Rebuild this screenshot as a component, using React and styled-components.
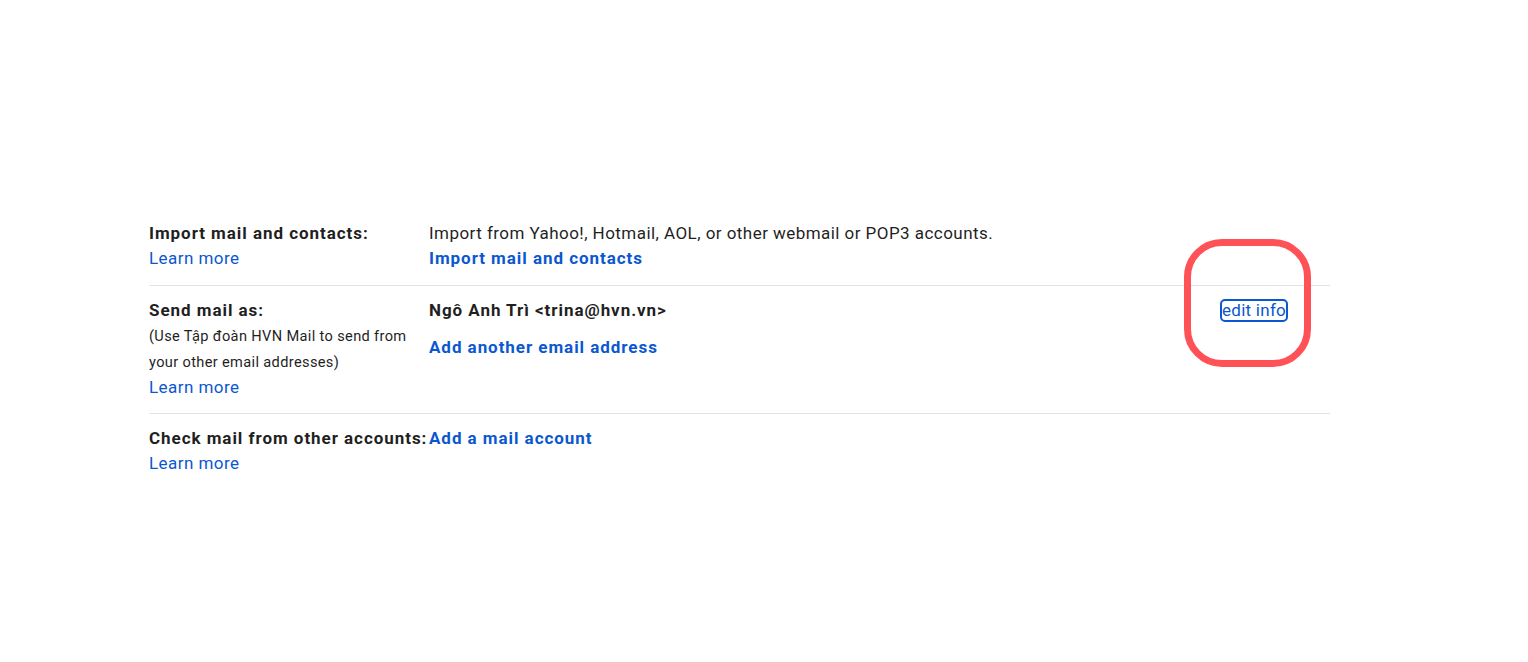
import React from 'react'
import styled, { createGlobalStyle } from 'styled-components'

const GlobalStyle = createGlobalStyle`
  body {
    margin: 0;
    background: #fff;
    font-family: Roboto, "Noto Sans", "Liberation Sans", sans-serif;
    color: #1f1f1f;
  }
`

const Page = styled.div`
  width: 1528px;
  height: 662px;
  box-sizing: border-box;
  padding: 221px 198px 0 149px;
`

const Table = styled.div`
  display: flex;
  flex-direction: column;
`

const Row = styled.div`
  display: flex;
  align-items: flex-start;
  padding: ${props => props.pad || '0 0 14px'};
  border-bottom: ${props => (props.last ? 'none' : '1px solid #e3e3e3')};
`

const LabelCell = styled.div`
  min-width: 280px;
  display: flex;
  flex-direction: column;
  font-size: 17px;
  line-height: 25px;
  letter-spacing: 0.45px;
`

const Label = styled.div`
  font-weight: 700;
  white-space: nowrap;
  letter-spacing: 0.95px;
`

const Hint = styled.div`
  font-size: 14.6px;
  line-height: 26px;
  letter-spacing: 0.35px;
`

const ValueCell = styled.div`
  flex: 1;
  display: flex;
  flex-direction: column;
  gap: ${props => props.gap || '0px'};
  font-size: 17px;
  line-height: 25px;
  letter-spacing: 0.45px;
`

const Link = styled.a`
  color: #0b57d0;
  text-decoration: none;
  font-weight: ${props => (props.bold ? 700 : 400)};
  letter-spacing: ${props => (props.bold ? '0.95px' : '0.45px')};
  cursor: pointer;
`

const Name = styled.div`
  font-weight: 700;
  letter-spacing: 0.95px;
`

const ActionCell = styled.div`
  position: relative;
  padding-right: 44px;
  font-size: 17px;
  line-height: 25px;
  letter-spacing: 0.25px;
`

const EditLink = styled.a`
  display: inline-block;
  color: #0b57d0;
  text-decoration: none;
  line-height: 19px;
  outline: 2px solid #0b57d0;
  border-radius: 3px;
  margin-top: 3px;
`

const Highlight = styled.div`
  position: absolute;
  left: -38px;
  top: -59px;
  width: 127px;
  height: 128px;
  box-sizing: border-box;
  border: 7px solid #ff5257;
  border-radius: 38px;
  pointer-events: none;
`

export default function App() {
  return (
    <>
      <GlobalStyle />
      <Page>
        <Table>
          <Row>
            <LabelCell>
              <Label>Import mail and contacts:</Label>
              <Link>Learn more</Link>
            </LabelCell>
            <ValueCell>
              <div>Import from Yahoo!, Hotmail, AOL, or other webmail or POP3 accounts.</div>
              <Link bold>Import mail and contacts</Link>
            </ValueCell>
          </Row>
          <Row pad="12px 0 13px">
            <LabelCell>
              <Label>Send mail as:</Label>
              <Hint>(Use Tập đoàn HVN Mail to send from</Hint>
              <Hint>your other email addresses)</Hint>
              <Link>Learn more</Link>
            </LabelCell>
            <ValueCell gap="12px">
              <Name>Ngô Anh Trì &lt;trina@hvn.vn&gt;</Name>
              <Link bold>Add another email address</Link>
            </ValueCell>
            <ActionCell>
              <EditLink>edit info</EditLink>
              <Highlight />
            </ActionCell>
          </Row>
          <Row pad="12px 0 0" last>
            <LabelCell>
              <Label>Check mail from other accounts:</Label>
              <Link>Learn more</Link>
            </LabelCell>
            <ValueCell>
              <Link bold>Add a mail account</Link>
            </ValueCell>
          </Row>
        </Table>
      </Page>
    </>
  )
}
